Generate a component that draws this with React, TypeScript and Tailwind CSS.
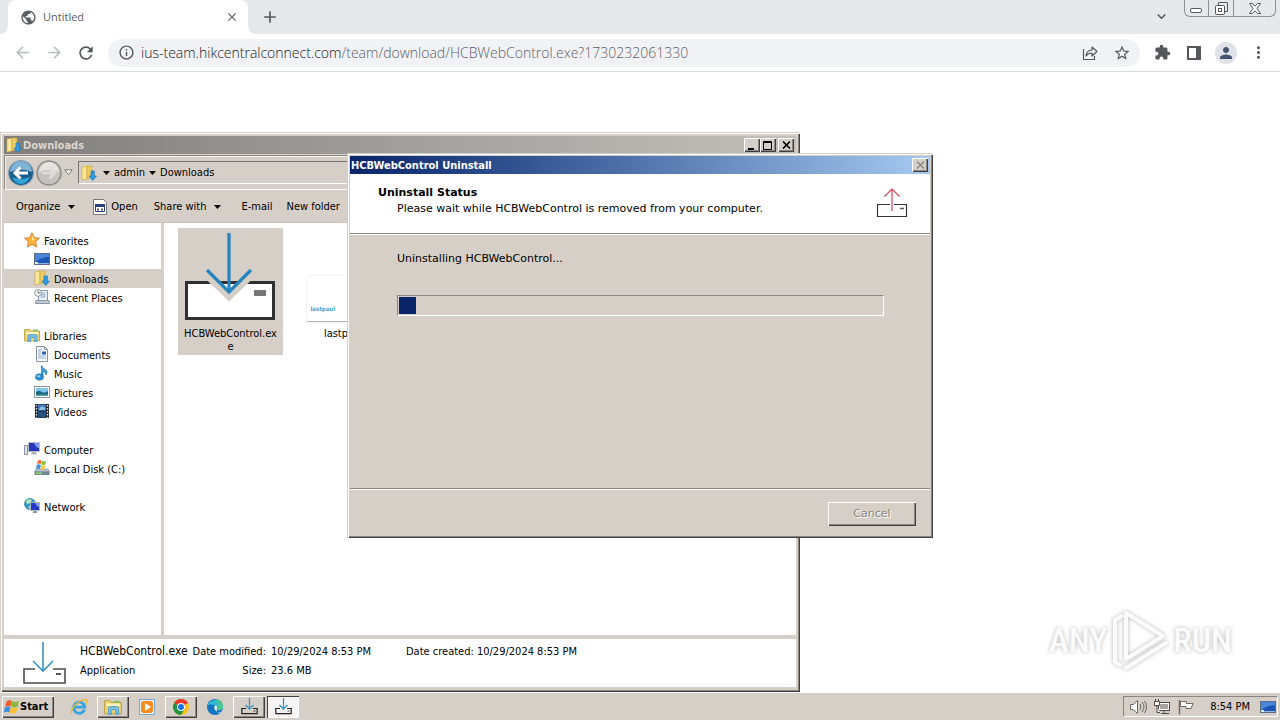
import type { ReactNode } from "react";
import clsx from "clsx";
import {
  MdAdd,
  MdArrowBack,
  MdArrowForward,
  MdClose,
  MdExtension,
  MdInfoOutline,
  MdKeyboardArrowDown,
  MdMoreVert,
  MdPerson,
  MdPublic,
  MdRefresh,
  MdStarBorder,
} from "react-icons/md";

const raised =
  "bg-[#d6cfc8] shadow-[inset_1px_1px_0_#fff,inset_-1px_-1px_0_#404040,inset_-2px_-2px_0_#8a8580]";
const windowFrame =
  "bg-[#d6cfc8] shadow-[inset_1px_1px_0_#d6cfc8,inset_2px_2px_0_#fff,inset_-1px_-1px_0_#404040,inset_-2px_-2px_0_#8a8580]";
const tahoma = "font-['DejaVu_Sans_Condensed','DejaVu_Sans',sans-serif]";
const verdana = "font-['DejaVu_Sans',sans-serif]";

/* ---------- icons ---------- */

const DownloadsIcon = () => (
  <svg width="16" height="16" viewBox="0 0 16 16">
    <path d="M1 2l5-1v13l-5 1z" fill="#f9e596" stroke="#c9a23c" strokeWidth=".6" />
    <path d="M6 1h5v11l-5 2z" fill="#eccb62" stroke="#c9a23c" strokeWidth=".6" />
    <path d="M10 6h3.400v5H15.500L11.700 15.500 8 11h2z" fill="#2f9be0" stroke="#1b6cae" strokeWidth=".6" />
  </svg>
);

const StarIcon = () => (
  <svg width="16" height="16" viewBox="0 0 16 16">
    <path
      d="M8 .8l2.200 4.900 5.200.5-3.900 3.500 1.200 5.300L8 12.200 3.300 15l1.200-5.300L.6 6.200l5.200-.5z"
      fill="#fbb53a"
      stroke="#d9741b"
      strokeWidth=".9"
    />
    <path d="M8 3l1.400 3.600L12 7 8 8.500z" fill="#ffe7a0" />
  </svg>
);

const DesktopIcon = () => (
  <svg width="16" height="16" viewBox="0 0 16 16">
    <rect x=".5" y="2.500" width="15" height="11" fill="#1d55b5" stroke="#5d6d86" />
    <path d="M1 3h14v3Q8 6 1 11z" fill="#4a86dc" />
    <path d="M1 12h14v1H1z" fill="#8fb6dc" />
    <path d="M1 11h3v2H1z" fill="#d9ecd0" />
  </svg>
);

const RecentIcon = () => (
  <svg width="16" height="16" viewBox="0 0 16 16">
    <path d="M4.500 1.500h9v10h-9z" fill="#eef3f7" stroke="#8897a5" />
    <path d="M6.500 4h5M6.500 6h5M6.500 8h5" stroke="#7aa0c4" />
    <path d="M2 11.500h13l.5 3H1.500z" fill="#c4ccd3" stroke="#8897a5" />
    <circle cx="4" cy="4" r="3.400" fill="#f5f5f5" stroke="#8897a5" />
    <path d="M4 2v2h2" fill="none" stroke="#555" strokeWidth=".8" />
  </svg>
);

const LibrariesIcon = ({ size = 16 }: { size?: number }) => (
  <svg width={size} height={size} viewBox="0 0 16 16">
    <path d="M.5 2.500h5l1 1.500h9v10H.5z" fill="#ecd476" stroke="#b99a35" strokeWidth=".8" />
    <path d="M2 5h12v2H2z" fill="#fff7c8" />
    <path d="M9 2.500h5v1.500H9z" fill="#7fbf61" />
    <path d="M4 14.500V9.500Q4 7.500 6 7.500h5q2 0 2 2v5h-2.500v-4h-4v4z" fill="#74c1ec" stroke="#3b8cc0" strokeWidth=".6" />
  </svg>
);

const DocumentIcon = () => (
  <svg width="16" height="16" viewBox="0 0 16 16">
    <path d="M2.500.5h8l3 3v12h-11z" fill="#fafcff" stroke="#8794a5" />
    <path d="M10.500.5v3h3" fill="none" stroke="#8794a5" />
    <path d="M4 4h4M4 6h3M4 8h3M4 10h8M4 12h8" stroke="#7598c4" strokeWidth=".8" />
    <path d="M8 5.500h4v3H8z" fill="#315fa8" />
  </svg>
);

const MusicIcon = () => (
  <svg width="16" height="16" viewBox="0 0 16 16">
    <path d="M7.500.5Q9 4 12 5q2 2 0 5Q12 7 9 6.500V12H7.500z" fill="#3fa3dc" stroke="#1e75ae" strokeWidth=".7" />
    <ellipse cx="5.500" cy="12" rx="4" ry="3.200" fill="#2f8fcf" stroke="#1e75ae" strokeWidth=".7" />
    <ellipse cx="4.600" cy="11.200" rx="1.600" ry="1" fill="#a5dcf6" />
  </svg>
);

const PicturesIcon = () => (
  <svg width="16" height="16" viewBox="0 0 16 16">
    <rect x=".5" y="2.500" width="15" height="11" fill="#fff" stroke="#8a959e" />
    <rect x="2" y="4" width="12" height="8" fill="#7cc6ee" />
    <path d="M2 8q3-2 6 0t6-1v5H2z" fill="#1c6681" />
    <path d="M2 10.500h12V12H2z" fill="#4ea49c" />
  </svg>
);

const VideosIcon = () => (
  <svg width="16" height="16" viewBox="0 0 16 16">
    <rect x="1" y="1" width="14" height="14" fill="#262c36" />
    <rect x="4" y="1.500" width="8" height="6" fill="#3d79b8" />
    <rect x="4" y="8.500" width="8" height="6" fill="#24507f" />
    <path d="M2.500 2v13M13.500 2v13" stroke="#dfe6ec" strokeWidth="1.200" strokeDasharray="1.500 1.500" />
    <path d="M5 6l3-3 3 2v2H5z" fill="#8cc1e6" />
  </svg>
);

const ComputerIcon = () => (
  <svg width="16" height="16" viewBox="0 0 16 16">
    <rect x=".5" y="4.500" width="3" height="9" fill="#dfe3e6" stroke="#8a949c" />
    <rect x="4.500" y="1.500" width="11" height="9" fill="#2438b8" stroke="#b6bec8" />
    <path d="M10 2h5v5q-3 0-5-5z" fill="#7f9bf0" />
    <path d="M8 11h4l1 2.500H7z" fill="#a9b2ba" />
  </svg>
);

const DiskIcon = () => (
  <svg width="16" height="16" viewBox="0 0 16 16">
    <path d="M2 9h12l1.500 3H.5z" fill="#b9c3cb" stroke="#75828c" strokeWidth=".6" />
    <path d="M.5 11.500h15V15H.5z" fill="#6f8794" />
    <path d="M2 12.500h6V14H2z" fill="#8fe06b" />
    <path d="M4 .5q2-1 3.500 0L7 4q-2-1-4 0z" fill="#ef6a35" />
    <path d="M8 .8q2 1 4 0l-.8 3.700q-2 1-3.700 0z" fill="#83c13f" />
    <path d="M2.800 4.700q2-1 4 0L6 9q-2-1-4 0z" fill="#3e8fe0" />
    <path d="M7.400 5q2 1 3.800 0l-.9 4.300q-2 1-3.700 0z" fill="#fbc935" />
  </svg>
);

const NetworkIcon = () => (
  <svg width="16" height="16" viewBox="0 0 16 16">
    <circle cx="6" cy="6" r="5.500" fill="#2c9ac4" stroke="#1d6d95" strokeWidth=".6" />
    <path d="M2 3q3-3 6-1L6 5 3 6zM4 8l3 1-1 2.500z" fill="#bdeec0" />
    <rect x="6.500" y="4.500" width="9" height="8" fill="#2438c8" stroke="#aeb8c4" />
    <path d="M11 5h4v4q-3-1-4-4z" fill="#7f9bf0" />
    <path d="M9.500 13h3l1 2h-5z" fill="#8d979f" />
  </svg>
);

const CalendarIcon = () => (
  <svg width="14" height="16" viewBox="0 0 14 16">
    <path d="M.5.500h10l3 3v12H.5z" fill="#fff" stroke="#777" />
    <path d="M2.500 5.500h9v7h-9z" fill="#fff" stroke="#26417c" />
    <path d="M2 5h10v3H2z" fill="#26417c" />
    <path d="M4 9.500h2v2H4zM8 9.500h2v2H8z" fill="#555" />
  </svg>
);

const InstallerOutline = () => (
  <svg width="44" height="42" viewBox="0 0 44 42" fill="none">
    <path d="M13 27H2v14h41V27H31" stroke="#4b4b52" strokeWidth="1.600" />
    <path d="M34 32h5" stroke="#555" strokeWidth="2" />
    <path d="M21 0v29M11 19l10 10 10-10" stroke="#3b93c8" strokeWidth="1.600" />
  </svg>
);

const InstallerTaskIcon = () => (
  <svg width="17" height="17" viewBox="0 0 17 17" fill="none">
    <path d="M5 10.500H.8v5.200h15.400v-5.200H12" stroke="#222" strokeWidth="1.200" />
    <path d="M12.500 13h2" stroke="#444" />
    <path d="M8.500 0v11M4.500 7l4 4 4-4" stroke="#3b93c8" strokeWidth="1.300" />
  </svg>
);

const InstallerIcon = () => (
  <svg width="93" height="90" viewBox="0 0 93 90">
    <rect x="2.500" y="50.500" width="87" height="36" fill="#fff" stroke="#302f31" strokeWidth="3" />
    <path d="M21 37L45 60 69 37 71 43 45 68 19 43z" fill="#d6cfc8" stroke="#d6cfc8" strokeWidth="2" />
    <path d="M45 1v59M23 38l22 22 22-22" fill="none" stroke="#2585bf" strokeWidth="3.200" />
    <path d="M70 58h12v6H70z" fill="#777" />
  </svg>
);

const UninstallIcon = () => (
  <svg width="32" height="32" viewBox="0 0 32 32" fill="none">
    <path d="M14 17.500H1.500v12h29v-12H18" stroke="#35333d" strokeWidth="1.200" />
    <path d="M24 21.500h4" stroke="#555" strokeWidth="1.500" />
    <path d="M16 2v22M8.500 9.500L16 2l7.500 7.500" stroke="#d0475a" strokeWidth="1.200" />
  </svg>
);

const WindowsFlag = () => (
  <svg width="17" height="16" viewBox="0 0 17 16">
    <path d="M3.500 2.500q3-2 5.500-.5L7.800 7.300q-2.500-1-5.500.4z" fill="#ec5f2b" />
    <path d="M9.400 2.200q3 1.400 6.600-.2L14.500 7.700q-3 1.500-6.400-.1z" fill="#86b93c" />
    <path d="M2 8.300q3-1.500 5.500-.3L6.300 13.300q-2.500-1.200-5.500.2z" fill="#3c8ee2" />
    <path d="M8 8.300q3 1.400 6.300.2L13 13.900q-3 1.400-6.300-.2z" fill="#fbc02d" />
  </svg>
);

const IeIcon = () => (
  <svg width="20" height="20" viewBox="0 0 20 20" fill="none">
    <path d="M15.500 12.500a5.600 5.600 0 1 1 .3-2.300H5" stroke="#39a6e4" strokeWidth="2.800" />
    <path d="M3 17C-1 15 8 4 15 2.500c4-.5 3 3 1.500 5" stroke="#e8b73b" strokeWidth="1.400" />
  </svg>
);

const MediaIcon = () => (
  <svg width="18" height="18" viewBox="0 0 18 18">
    <rect x="1.500" y="1.500" width="15" height="15" fill="#e7f0f7" stroke="#7aa9cf" />
    <rect x="3" y="3" width="12" height="12" rx="3" fill="#f58a1f" />
    <path d="M7 5l6 4-6 4z" fill="#fff" />
  </svg>
);

const ChromeIcon = () => (
  <svg width="16" height="16" viewBox="0 0 16 16">
    <circle cx="8" cy="8" r="8" fill="#fbc116" />
    <path d="M8 8L1.070 4A8 8 0 0 1 14.930 4z" fill="#e33b2e" />
    <path d="M8 8L1.070 4A8 8 0 0 0 8 16l3.500-6z" fill="#229342" />
    <path d="M8 4h6.930L14 3H8z" fill="#e33b2e" />
    <circle cx="8" cy="8" r="4" fill="#fff" />
    <circle cx="8" cy="8" r="3" fill="#1a73e8" />
  </svg>
);

const EdgeIcon = () => (
  <svg width="16" height="16" viewBox="0 0 16 16">
    <circle cx="8" cy="8" r="8" fill="#1673c4" />
    <path d="M.3 7A8 8 0 0 1 16 8c0 3-4 4-6 2.500 1.500-2 0-4.500-3-4.500C4 5 1 6 .3 7z" fill="#35b9d0" />
    <path d="M8 0a8 8 0 0 1 8 8c0 3-4 4-6 2.500Q14 5 8 0z" fill="#4bc98f" />
    <path d="M9.500 10.500q1.800-3-1-4.300-2.500 2 0 5.300 3 2.500 6 1-2 2-4 .5z" fill="#e9f6fb" />
  </svg>
);

const Triangle = ({ className }: { className?: string }) => (
  <svg className={className} width="7" height="4" viewBox="0 0 7 4">
    <path d="M0 0h7L3.500 4z" fill="currentColor" />
  </svg>
);

/* ---------- browser ---------- */

const ToolButton = ({ label, children, muted }: { label: string; children: ReactNode; muted?: boolean }) => (
  <button
    aria-label={label}
    className={clsx("flex h-8 w-8 items-center justify-center", muted ? "text-[#b9bbbe]" : "text-[#54575b]")}
  >
    {children}
  </button>
);

const Browser = () => (
  <section className="flex flex-1 flex-col bg-white font-['Open_Sans','Noto_Sans',sans-serif]">
    <div className="flex h-[34px] bg-[#e6e9ec]">
      <span className="w-2 bg-white">
        <span className="block h-full rounded-br-lg bg-[#e6e9ec]" />
      </span>
      <div className="flex w-60 items-center rounded-t-lg bg-white pr-2 pl-3 text-[#5a5d61]">
        <MdPublic size={17} />
        <span className="ml-1.5 flex-1 text-[11px]">Untitled</span>
        <button aria-label="Close tab" className="flex h-4 w-4 items-center justify-center">
          <MdClose size={14} />
        </button>
      </div>
      <span className="w-2 bg-white">
        <span className="block h-full rounded-bl-lg bg-[#e6e9ec]" />
      </span>
      <button aria-label="New tab" className="ml-1 text-[#54575b]">
        <MdAdd size={20} />
      </button>
      <div className="ml-auto flex items-start text-[#54575b]">
        <button aria-label="Search tabs" className="mt-2 mr-3.5">
          <MdKeyboardArrowDown size={17} />
        </button>
        <div className="mr-1 flex h-[17px] divide-x divide-[#8d9096] rounded-b-md border border-t-0 border-[#8d9096]">
          <button aria-label="Minimize browser" className="flex w-6 items-center justify-center">
            <svg width="13" height="12" viewBox="0 0 13 12">
              <rect x=".5" y="6.500" width="11" height="4" rx="1.500" fill="#fff" stroke="#54575b" />
            </svg>
          </button>
          <button aria-label="Restore browser" className="flex w-[25px] items-center justify-center">
            <svg width="13" height="13" viewBox="0 0 13 13" fill="none" stroke="#54575b">
              <path d="M3.500 3.500v-3h9v9h-3" />
              <rect x=".5" y="3.500" width="9" height="9" rx="1" fill="#fff" />
              <rect x="3.500" y="6.500" width="3" height="3" />
            </svg>
          </button>
          <button aria-label="Close browser" className="flex w-[41px] items-center justify-center">
            <svg width="12" height="11" viewBox="0 0 12 11" fill="#fff" stroke="#54575b">
              <path d="M.5.500h3L6 3.200 8.500.5h3L8 5.500l3.500 5h-3L6 7.800l-2.500 2.700h-3L4 5.500z" />
            </svg>
          </button>
        </div>
      </div>
    </div>
    <div className="flex h-[38px] items-center border-b border-[#d9dadc] px-1.5">
      <ToolButton label="Back" muted>
        <MdArrowBack size={19} />
      </ToolButton>
      <ToolButton label="Forward" muted>
        <MdArrowForward size={19} />
      </ToolButton>
      <ToolButton label="Reload">
        <MdRefresh size={20} />
      </ToolButton>
      <div className="mx-1.5 flex h-7 flex-1 items-center rounded-full bg-[#f1f2f5] pr-0.5 pl-2.5 text-[#54575b]">
        <MdInfoOutline size={17} />
        <p className="ml-1.5 flex-1 text-sm font-light text-[#5c6065]">
          <span className="text-[#202124]">ius-team.hikcentralconnect.com</span>
          /team/download/HCBWebControl.exe?1730232061330
        </p>
        <ToolButton label="Share">
          <svg width="16" height="16" viewBox="0 0 16 16" fill="none" stroke="currentColor" strokeWidth="1.200">
            <path d="M1.500 4v10.500h11V11" />
            <path d="M4 11q.5-5.500 6-6V2l5 4.500-5 4.500V8q-4 0-6 3z" strokeLinejoin="round" />
          </svg>
        </ToolButton>
        <ToolButton label="Bookmark">
          <MdStarBorder size={18} />
        </ToolButton>
      </div>
      <ToolButton label="Extensions">
        <MdExtension size={17} />
      </ToolButton>
      <ToolButton label="Side panel">
        <svg width="14" height="14" viewBox="0 0 14 14">
          <rect x="1" y="1" width="12" height="12" fill="#fff" stroke="currentColor" strokeWidth="2" />
          <path d="M9 1h4v12H9z" fill="currentColor" />
        </svg>
      </ToolButton>
      <ToolButton label="Profile">
        <span className="flex h-[22px] w-[22px] items-center justify-center rounded-full bg-[#dfe3e9] text-[#44546f]">
          <MdPerson size={18} />
        </span>
      </ToolButton>
      <ToolButton label="Menu">
        <MdMoreVert size={19} />
      </ToolButton>
    </div>
  </section>
);

/* ---------- explorer ---------- */

const navItems = [
  { label: "Favorites", icon: <StarIcon />, top: true },
  { label: "Desktop", icon: <DesktopIcon /> },
  { label: "Downloads", icon: <DownloadsIcon />, selected: true },
  { label: "Recent Places", icon: <RecentIcon />, last: true },
  { label: "Libraries", icon: <LibrariesIcon />, top: true },
  { label: "Documents", icon: <DocumentIcon /> },
  { label: "Music", icon: <MusicIcon /> },
  { label: "Pictures", icon: <PicturesIcon /> },
  { label: "Videos", icon: <VideosIcon />, last: true },
  { label: "Computer", icon: <ComputerIcon />, top: true },
  { label: "Local Disk (C:)", icon: <DiskIcon />, last: true },
  { label: "Network", icon: <NetworkIcon />, top: true },
];

const CaptionButton = ({ label, children, className }: { label: string; children: ReactNode; className?: string }) => (
  <button aria-label={label} className={clsx(raised, "flex h-[14px] w-4 items-center justify-center", className)}>
    {children}
  </button>
);

const Explorer = () => (
  <section
    aria-label="Downloads"
    className={clsx(windowFrame, tahoma, "absolute top-[132px] left-0 flex h-[560px] w-[800px] flex-col p-1 text-[11px] text-black")}
  >
    <header className="flex h-[18px] items-center bg-linear-to-r from-[#807f7d] to-[#c3c0bb] pr-0.5 pl-0.5">
      <DownloadsIcon />
      <h2 className="ml-px flex-1 pt-0.5 font-bold text-[#dcd6cf]">Downloads</h2>
      <CaptionButton label="Minimize">
        <svg width="10" height="9" viewBox="0 0 10 9">
          <path d="M1 7h6v2H1z" />
        </svg>
      </CaptionButton>
      <CaptionButton label="Maximize">
        <svg width="10" height="9" viewBox="0 0 10 9" fill="none" stroke="#000">
          <path d="M.5.500h8v8h-8zM0 1.500h9" />
        </svg>
      </CaptionButton>
      <CaptionButton label="Close" className="ml-0.5">
        <svg width="9" height="8" viewBox="0 0 9 8" stroke="#000" strokeWidth="1.600">
          <path d="M1 .5l7 7M8 .5l-7 7" />
        </svg>
      </CaptionButton>
    </header>

    <div className="mt-px flex h-[35px] items-center border border-[#8a8580] border-r-white border-b-white pl-[3px] shadow-[inset_1px_1px_0_#f4f1ee]">
      <button aria-label="Back">
        <svg width="26" height="26" viewBox="0 0 26 26">
          <circle cx="13" cy="13" r="12.500" fill="#1c5f8f" stroke="#8fa3b0" />
          <path d="M2 12a11 11 0 0 1 22 0q-11-5-22 0z" fill="#7fb3d3" />
          <path d="M4 17q9 4 18 0-3 7-9 7t-9-7z" fill="#2fa3d6" />
          <path d="M12.500 7.500L7 13l5.500 5.500M8 13h12" fill="none" stroke="#fff" strokeWidth="3" />
        </svg>
      </button>
      <button aria-label="Forward" className="ml-0.5">
        <svg width="26" height="26" viewBox="0 0 26 26">
          <circle cx="13" cy="13" r="12" fill="#c6c3bf" stroke="#8f8c89" strokeWidth="1.500" />
          <path d="M3 12a10 10 0 0 1 20 0q-10-4-20 0z" fill="#e5e3e0" />
          <path d="M13.500 7.500L19 13l-5.500 5.500M18 13H6" fill="none" stroke="#dedbd8" strokeWidth="3" />
        </svg>
      </button>
      <button aria-label="Recent locations" className="ml-0.5">
        <svg width="9" height="7" viewBox="0 0 9 7">
          <path d="M.8.800h7.400L4.500 5.800z" fill="#fff" stroke="#77736f" />
        </svg>
      </button>
      <nav className="ml-[5px] flex h-[23px] flex-1 items-center border border-[#77736f] border-r-white border-b-white pl-0.5">
        <DownloadsIcon />
        <Triangle className="mr-1 ml-1.5" />
        <a href="#admin" className="pt-0.5">
          admin
        </a>
        <Triangle className="mr-1 ml-1" />
        <a href="#downloads" className="pt-0.5">
          Downloads
        </a>
      </nav>
    </div>

    <div className="flex h-[33px] items-center border-b border-[#c9c2bb] pt-0.5 pl-3">
      <button className="flex items-center">
        Organize <Triangle className="ml-2" />
      </button>
      <button className="ml-[18px] flex items-center gap-1">
        <CalendarIcon /> Open
      </button>
      <button className="ml-4 flex items-center">
        Share with <Triangle className="ml-2" />
      </button>
      <button className="ml-5">E-mail</button>
      <button className="ml-3.5">New folder</button>
    </div>

    <div className="flex flex-1 gap-[3px]">
      <ul className="w-[157px] bg-white pt-2">
        {navItems.map((item) => (
          <li key={item.label} className={clsx(item.last && "mb-[19px]")}>
            <a
              href="#nav"
              className={clsx(
                "flex h-[19px] items-start gap-1 pt-px leading-[19px]",
                item.top ? "pl-5" : "pl-[30px]",
                item.selected && "bg-[#d6cfc8]",
              )}
            >
              {item.icon}
              {item.label}
            </a>
          </li>
        ))}
      </ul>
      <div className="flex flex-1 items-start gap-2 bg-white pt-[5px] pl-3.5">
        <button className="flex h-[127px] w-[105px] flex-col items-center bg-[#d6cfc8] pt-1 leading-[13px]">
          <InstallerIcon />
          <span className="mt-[5px]">
            HCBWebControl.ex
            <br />e
          </span>
        </button>
        <button className="flex w-[105px] flex-col items-center pt-12 leading-[13px]">
          <span className="flex h-[46px] w-[74px] items-end border-b border-[#b5b5b5] bg-white pb-1.5 pl-1 text-[6px] font-bold text-[#45a5cf] shadow-[0_0_2px_#ddd]">
            lastpaul
          </span>
          <span className="mt-[5px]">lastpaul</span>
        </button>
      </div>
    </div>

    <footer className="mt-1 mb-px flex h-[48px] bg-white pt-[3px] pl-[18px]">
      <InstallerOutline />
      <div className="ml-3.5 flex leading-[19px] whitespace-nowrap">
        <div className="w-[112px]">
          <p className="text-xs leading-[19px]">HCBWebControl.exe</p>
          <p>Application</p>
        </div>
        <div className="w-[74px] text-right">
          <p>Date modified:</p>
          <p>Size:</p>
        </div>
        <div className="ml-[5px] w-[135px]">
          <p>10/29/2024 8:53 PM</p>
          <p>23.6 MB</p>
        </div>
        <p>Date created: 10/29/2024 8:53 PM</p>
      </div>
    </footer>
  </section>
);

/* ---------- uninstaller ---------- */

const UninstallDialog = () => (
  <section
    role="dialog"
    aria-label="HCBWebControl Uninstall"
    className={clsx(windowFrame, verdana, "absolute top-[153px] left-[347px] flex h-[385px] w-[586px] flex-col p-[3px] text-[11px] text-black")}
  >
    <header
      className={clsx(tahoma, "flex h-[18px] items-center bg-linear-to-r from-[#0a246a] to-[#a6caf0] pr-0.5 pl-px")}
    >
      <h2 className="flex-1 pt-0.5 font-bold text-white">HCBWebControl Uninstall</h2>
      <CaptionButton label="Close">
        <svg width="9" height="8" viewBox="0 0 9 8" stroke="#8a8580" strokeWidth="1.400">
          <path d="M1 .5l7 7M8 .5l-7 7" />
        </svg>
      </CaptionButton>
    </header>
    <div className="flex h-[60px] items-start justify-between border-b border-[#8a8580] bg-white pt-[11px] pr-[22px] pl-7">
      <div className="leading-4">
        <h3 className="font-bold">Uninstall Status</h3>
        <p className="pl-[19px]">Please wait while HCBWebControl is removed from your computer.</p>
      </div>
      <div className="pt-0.5">
        <UninstallIcon />
      </div>
    </div>
    <div className="flex-1 border-t border-b border-t-white border-b-[#8a8580] pt-4 pr-[46px] pl-[47px]">
      <p id="progress-label" className="leading-4">
        Uninstalling HCBWebControl...
      </p>
      <div
        role="progressbar"
        aria-labelledby="progress-label"
        aria-valuenow={4}
        className="mt-7 h-[21px] border border-[#8a8580] border-r-white border-b-white p-px"
      >
        <div className="h-full w-[17px] bg-[#0a246a]" />
      </div>
    </div>
    <footer className="flex h-[46px] items-start justify-end border-t border-white pt-3 pr-3.5">
      <button
        disabled
        className={clsx(raised, "h-6 w-[88px] text-[#8a8580] [text-shadow:1px_1px_0_#fff]")}
      >
        Cancel
      </button>
    </footer>
  </section>
);

/* ---------- taskbar ---------- */

const tasks = [
  { label: "Internet Explorer", icon: <IeIcon /> },
  { label: "Explorer", icon: <LibrariesIcon size={18} />, open: true },
  { label: "Media Player", icon: <MediaIcon /> },
  { label: "Chrome", icon: <ChromeIcon />, open: true },
  { label: "Edge", icon: <EdgeIcon /> },
  { label: "Installer", icon: <InstallerTaskIcon />, open: true },
  { label: "Uninstaller", icon: <InstallerTaskIcon />, active: true },
];

const Taskbar = () => (
  <footer
    className={clsx(tahoma, "flex h-[28px] items-center border-t border-white bg-[#d6cfc8] px-0.5 text-[11px] text-black")}
  >
    <button className={clsx(raised, "flex h-[22px] w-[52px] items-center pl-px font-bold")}>
      <WindowsFlag />
      <span className="pt-0.5">Start</span>
    </button>
    <div className="ml-[9px] flex gap-0.5">
      {tasks.map((task) => (
        <button
          key={task.label}
          aria-label={task.label}
          className={clsx(
            "flex h-[22px] w-8 items-center justify-center",
            task.open && raised,
            task.active && "bg-[#f6f4f2] shadow-[inset_1px_1px_0_#404040,inset_-1px_-1px_0_#fff]",
          )}
        >
          {task.icon}
        </button>
      ))}
    </div>
    <div className="ml-auto flex h-[21px] items-center border border-[#8a8580] border-r-white border-b-white pr-px pl-1.5">
      <svg width="18" height="16" viewBox="0 0 18 16" fill="#fff" stroke="#6c6966">
        <path d="M.5 5.500h3l4-4v13l-4-4h-3z" />
        <path d="M10 5q2 3 0 6M12 3q4 5 0 10M14.500 2q4 6 0 12" fill="none" />
      </svg>
      <svg className="ml-1.5" width="17" height="16" viewBox="0 0 17 16" fill="#fff" stroke="#4d4a48">
        <rect x="4.500" y="3.500" width="11" height="8" />
        <rect x="6.500" y="5.500" width="7" height="4" fill="#a5a29f" stroke="#a5a29f" />
        <path d="M7 14.500h8M10 12v2" />
        <path d="M.5 2.500h5v4h-5zM1.500 0v2M4.500 0v2M3 7v6.500h3" />
      </svg>
      <svg className="ml-[7px]" width="17" height="16" viewBox="0 0 17 16" fill="#fff" stroke="#6c6966">
        <path d="M1.500 1v14.500" strokeWidth="1.500" />
        <path d="M2.500 2.500h6v2h6.500l-2 5H8v-2H2.500z" />
      </svg>
      <time className="ml-[15px] pt-0.5">8:54 PM</time>
      <button aria-label="Show desktop" className="ml-2.5">
        <DesktopIcon />
      </button>
    </div>
  </footer>
);

const Watermark = () => (
  <div className="absolute right-12 bottom-12 flex items-center font-['Roboto_Condensed','Open_Sans_Condensed','Roboto',sans-serif] text-[34px] leading-[64px] font-medium text-[#fbfbfb] [text-shadow:0_0_4px_#b5b5b5]">
    ANY
    <svg
      className="mx-1 drop-shadow-[0_0_2px_#b5b5b5]"
      width="58"
      height="64"
      viewBox="0 0 58 64"
      fill="none"
      stroke="#fbfbfb"
      strokeWidth="4"
      strokeLinejoin="round"
      strokeLinecap="round"
    >
      <path d="M11 8L4 12v42l5 3" />
      <path d="M15 5v46l37-23z" />
      <path d="M15 60l40-25" />
    </svg>
    RUN
  </div>
);

export default function App() {
  return (
    <main className="relative flex h-screen min-h-[700px] flex-col overflow-hidden bg-white">
      <Browser />
      <Explorer />
      <UninstallDialog />
      <Watermark />
      <Taskbar />
    </main>
  );
}
